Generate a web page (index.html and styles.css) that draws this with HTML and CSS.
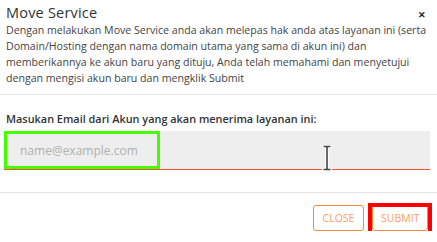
FILE: index.html
```html
<!DOCTYPE html>
<html>
<head>
<meta charset="utf-8">
<link rel="stylesheet" href="styles.css">
</head>
<body>
<div class="modal">
  <div class="header">
    <div class="title">Move Service</div>
    <span class="close-x">&#x2715;</span>
  </div>
  <p class="desc">Dengan melakukan Move Service anda akan melepas hak anda atas layanan ini (serta Domain/Hosting dengan nama domain utama yang sama di akun ini) dan memberikannya ke akun baru yang dituju, Anda telah memahami dan menyetujui dengan mengisi akun baru dan mengklik Submit</p>
  <div class="divider divider-top"></div>
  <div class="body">
    <label class="label">Masukan Email dari Akun yang akan menerima layanan ini:</label>
    <div class="field">
      <input class="input" type="text" placeholder="name@example.com">
      <div class="highlight-green"></div>
      <svg class="ibeam" width="10" height="26" viewBox="0 0 10 26">
        <path d="M1.5 1.5h7M5 1.5v23M1.5 24.5h7" stroke="#fff" stroke-width="3.5" fill="none" stroke-linecap="round"/>
        <path d="M1.5 1.5h7M5 1.5v23M1.5 24.5h7" stroke="#444" stroke-width="1.6" fill="none"/>
      </svg>
    </div>
  </div>
  <div class="divider"></div>
  <div class="footer">
    <button class="btn">CLOSE</button>
    <button class="btn btn-submit">SUBMIT</button>
  </div>
</div>
</body>
</html>
```
FILE: styles.css
```css
html, body {
  margin: 0;
  padding: 0;
  background: #fff;
}
.modal {
  width: 437px;
  font-family: "Open Sans", "Liberation Sans", sans-serif;
  color: #444;
}
.header {
  display: flex;
  justify-content: space-between;
  align-items: flex-start;
  padding: 3px 11px 0 6px;
}
.title {
  font-size: 14.5px;
  font-weight: 400;
  color: #333;
  line-height: 19px;
  letter-spacing: 0.2px;
}
.close-x {
  font-size: 9px;
  font-weight: 700;
  color: #222;
  margin-top: 5px;
}
.desc {
  margin: 0;
  padding: 0 6px 0 6px;
  font-size: 10.6px;
  line-height: 16px;
  color: #444;
}
.divider {
  height: 1px;
  background: #e3e3e3;
}
.divider-top {
  margin-top: 8px;
}
.body {
  padding: 16px 7px 22px 4px;
}
.label {
  display: block;
  padding-left: 2px;
  font-size: 10.9px;
  font-weight: 600;
  color: #333;
  line-height: 16px;
}
.field {
  position: relative;
  margin-top: 4px;
  border-bottom: 1px solid #f4512c;
}
.input {
  display: block;
  box-sizing: border-box;
  width: 100%;
  height: 38px;
  margin: 0;
  padding: 0 16px;
  border: 0;
  background: #eee;
  font-family: "Open Sans", sans-serif;
  font-size: 12px;
  color: #333;
  outline: none;
}
.input::placeholder {
  color: #b0b0b0;
}
.highlight-green {
  position: absolute;
  left: 0;
  top: 0;
  width: 156px;
  height: 38px;
  box-sizing: border-box;
  border: 3px solid #44ff00;
}
.ibeam {
  position: absolute;
  left: 318px;
  top: 14px;
}
.footer {
  display: flex;
  justify-content: flex-end;
  gap: 8px;
  padding: 12px 9px 0 0;
}
.btn {
  position: relative;
  box-sizing: border-box;
  height: 26px;
  padding: 0 8px;
  background: #fff;
  border: 1px solid #f58a3c;
  border-radius: 3px;
  font-family: "Open Sans", sans-serif;
  font-size: 10.5px;
  color: #f7a060;
  cursor: pointer;
}
.btn:first-child {
  width: 51px;
}
.btn-submit {
  width: 56px;
}
.btn-submit::after {
  content: "";
  position: absolute;
  left: -5px;
  top: -3px;
  right: -5px;
  bottom: -6px;
  border: 4px solid #f00;
}
```
